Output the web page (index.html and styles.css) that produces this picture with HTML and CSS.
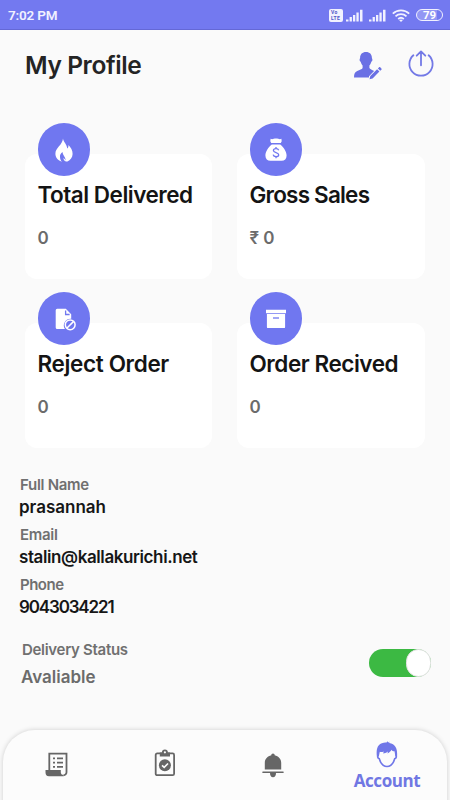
FILE: index.html
```html
<!DOCTYPE html>
<html lang="en">
<head>
    <meta charset="UTF-8">
    <meta name="viewport" content="width=device-width, initial-scale=1.0">
    <title>My Profile</title>
    <link rel="stylesheet" href="styles.css">
</head>
<body>
    <div class="status-bar">
        <span class="time">7:02 PM</span>
        <div class="status-icons">
            <div class="volte"><span>Vo</span><span>LTE</span></div>
            <svg class="signal" viewBox="0 0 17 13" width="17" height="13">
                <path d="M0 12.5v-2h2.5v2zM3.6 12.5V8h2.3v4.5zM7 12.5V6h2.3v6.5zM10.4 12.5V3.5h2.3v9zM14 12.5V.7h2.5v11.8z"/>
            </svg>
            <svg class="signal" viewBox="0 0 17 13" width="17" height="13">
                <path d="M0 12.5v-2h2.5v2zM3.6 12.5V8h2.3v4.5zM7 12.5V6h2.3v6.5zM10.4 12.5V3.5h2.3v9zM14 12.5V.7h2.5v11.8z"/>
            </svg>
            <svg class="wifi" viewBox="0 0 18 13" width="18" height="13">
                <path class="arc" d="M.8 4.600a11.800 11.800 0 0 1 16.400 0M3.500 7.300a8 8 0 0 1 11 0M6.200 10a4.100 4.100 0 0 1 5.600 0"/>
                <path d="M9 13 7.200 11.300a2.600 2.600 0 0 1 3.600 0z"/>
            </svg>
            <span class="battery">79</span>
        </div>
    </div>

    <header>
        <h1>My Profile</h1>
        <div class="header-icons">
            <svg viewBox="0 0 28 28" width="28" height="28">
                <path d="M12 0c3.700 0 5.900 2.300 5.900 5.800 0 1 .6 1 .5 2.300-.1 1-.7 1.500-1.100 1.700-.3 1.600-1 2.700-1.900 3.600v2.600c.6 1.300 2.600 2 4.700 2.900L15 24.200v1.300H0c0-3.900.9-5.500 3.200-6.500 2.400-1 4.800-1.700 5.400-3v-2.600c-.9-.9-1.600-2-1.900-3.600-.5-.2-1-.7-1.100-1.700-.1-1.300.5-1.300.5-2.300C6.100 2.300 8.300 0 12 0z"/>
                <path d="m15.500 27.300.8-3.200 6.800-6.900 2.300 2.300-6.800 6.900zM23.900 16.400l1.200-1.100c.4-.4.900-.3 1.300.1l1 1c.4.400.4.900 0 1.300l-1.200 1.100z"/>
            </svg>
            <svg class="line" viewBox="0 0 26 27" width="26" height="27">
                <path d="M5.400 5.300A11.600 11.600 0 1 0 20.600 5.300M13 15.300V1.500M8.700 5.700 13 1.400l4.300 4.300"/>
            </svg>
        </div>
    </header>

    <section class="cards">
        <div class="card">
            <div class="circle">
                <svg viewBox="0 0 18 24" width="18" height="24">
                    <path d="M8 .5c.3 3.200 3.800 5.500 4.300 10.100.9-.8 1.200-2 1.200-3.600 2.200 2.300 4.300 5.600 4.100 9.100-.1 3.300-2.200 6.300-5.200 7.400H6.500C2.700 22.200.4 19.400.4 15.800.4 9.500 7.400 7.300 8 .5z"/>
                    <path class="slot" d="M7.600 13.900c-1.900 1.300-2.800 3-2.600 5 .1 2 .8 3.500 2 5.100h4.100c-1.600-.9-2.600-2.400-2.700-4.100.9.600 1.700 1.500 2.200 2.500.1-3.700-3.200-5.500-3-8.500z"/>
                </svg>
            </div>
            <h2 class="t1">Total Delivered</h2>
            <p>0</p>
        </div>
        <div class="card">
            <div class="circle">
                <svg viewBox="0 0 22 24" width="22" height="24">
                    <path d="M5.600.8c1.800.9 3-.2 5.400-.2s3.600 1.100 5.400.2l.3 2.500-.9 1.700H6.200L5.300 3.300z"/>
                    <path d="M6.800 6.400h8.400c3.300 2.500 6.400 7 6.400 11.100 0 3.500-2 5.300-5 5.300H5.400c-3 0-5-1.800-5-5.300 0-4.100 3.100-8.600 6.400-11.100z"/>
                    <path class="cut" d="M13.700 12.300c-.4-1.200-1.300-1.700-2.700-1.700-1.600 0-2.600.8-2.600 1.900 0 2.700 5.300 1.400 5.300 4.200 0 1.200-1.100 2-2.700 2-1.500 0-2.600-.7-2.900-2M11 9v1.700M11 18.600v1.600"/>
                </svg>
            </div>
            <h2 class="t2">Gross Sales</h2>
            <p>₹ 0</p>
        </div>
        <div class="card">
            <div class="circle">
                <svg class="file" viewBox="0 0 22 23" width="22" height="23">
                    <path d="M2.200.7h8.600l5.400 5.600v4.400a6.800 6.800 0 0 0-6.300 10.400H2.200A1.500 1.500 0 0 1 .7 19.600V2.200A1.500 1.500 0 0 1 2.200.7z"/>
                    <path class="cut" d="M10.600 2.500v4h4"/>
                    <circle class="ban" cx="15.200" cy="16.800" r="4.900"/>
                    <path class="ban" d="m11.800 20.200 6.800-6.800"/>
                </svg>
            </div>
            <h2 class="t3">Reject Order</h2>
            <p>0</p>
        </div>
        <div class="card">
            <div class="circle">
                <svg class="box" viewBox="0 0 20 20" width="20" height="20">
                    <path d="M0 .8h20v3.500H0zM.9 5h18.200v12.900a1.200 1.200 0 0 1-1.200 1.200H2.100a1.200 1.200 0 0 1-1.200-1.200z"/>
                    <path class="cut" d="M7 9h6"/>
                </svg>
            </div>
            <h2 class="t4">Order Recived</h2>
            <p>0</p>
        </div>
    </section>

    <section class="details">
        <div class="label l1">Full Name</div>
        <div class="value v1">prasannah</div>
        <div class="label l2">Email</div>
        <div class="value v2">stalin@kallakurichi.net</div>
        <div class="label l3">Phone</div>
        <div class="value v3">9043034221</div>
    </section>

    <section class="delivery">
        <div>
            <div class="label l4">Delivery Status</div>
            <div class="available">Avaliable</div>
        </div>
        <div class="toggle"><span class="knob"></span></div>
    </section>

    <nav>
        <a class="nav-item orders">
            <svg viewBox="0 0 24 25" width="24" height="25">
                <path class="stroke" d="M4.300 18V1.700h17.200v18.600a3 3 0 0 1-3 3"/>
                <path d="M.5 18h15.300v2.200c0 1.700 1 2.600 2.700 2.600v1.500H4C1.600 24.300.5 22.700.5 20.300z"/>
                <path d="M8 5.500h2v1.800H8zM12 5.500h6v1.800h-6zM8 9.700h2v1.800H8zM12 9.700h6v1.800h-6zM8 13.900h2v1.800H8zM12 13.900h6v1.800h-6z"/>
            </svg>
        </a>
        <a class="nav-item tasks">
            <svg viewBox="0 0 22 28" width="22" height="28">
                <rect class="stroke" x="1.700" y="4.400" width="18.400" height="21.800" rx="1.500"/>
                <path d="M5.800 3.500h2.100a3 3 0 0 1 6 0h2.100v4H5.800z"/>
                <circle class="hole" cx="10.900" cy="3.300" r="1.100"/>
                <circle cx="10.900" cy="16.300" r="6"/>
                <path class="check" d="m8 16.300 2.200 2.100 3.800-3.900"/>
            </svg>
        </a>
        <a class="nav-item alerts">
            <svg viewBox="0 0 22 25" width="22" height="25">
                <path d="M11 .5c1 0 1.700.7 1.700 1.800 3.800.9 6.500 3.700 6.500 7.400v6.800H2.800V9.700c0-3.700 2.700-6.500 6.500-7.400C9.300 1.200 10 .5 11 .5z"/>
                <path d="M1 18.400h20a.8.800 0 0 1 0 1.600h-7c0 2.500-1 4.200-3 4.200S8 22.500 8 20H1a.8.800 0 0 1 0-1.600z"/>
            </svg>
        </a>
        <a class="nav-item account">
            <svg viewBox="0 0 22 27" width="22" height="27">
                <path class="face" d="M2 11.500 1.700 16c.2 1 .8 1.400 1.600 1.700 1.300 4.600 4.200 7.800 7.700 7.800s6.400-3.200 7.700-7.800c.8-.3 1.400-.7 1.600-1.700l-.3-4.500"/>
                <path d="M.9 15.500C.2 9.200.9 4 5.800 2.200 8 1.400 9.300 1.500 10.600 1.600L11.200.2l1.300 1.200.9-1-.2 1.500c5.800.7 8.600 5.300 7.900 13.600h-1.700l-.9-5.200c-1.500 0-2.400-.5-3.100-1.500-.7 1.600-1.900 2.800-4 3.600l.6-2c-2.200 1.500-3.200 1.900-4.800 2l.5-1.800c-1.600.6-2.900.7-3.900.2l-1 4.700z"/>
            </svg>
            <span>Account</span>
        </a>
    </nav>
</body>
</html>
```

FILE: styles.css
```css
* {
    box-sizing: border-box;
}
body {
    font-family: Inter, "Noto Sans", sans-serif;
    background-color: #FAFAFA;
    margin: 0;
    height: 800px;
    display: flex;
    flex-direction: column;
    overflow: hidden;
}
h1, h2, p {
    margin: 0;
    font-weight: 600;
    white-space: nowrap;
}
svg {
    display: block;
    flex: none;
}

/* Status bar */
.status-bar {
    height: 30px;
    flex: none;
    background-color: #7379F0;
    border-bottom: 1px solid #6468D6;
    color: #F1F1FF;
    display: flex;
    justify-content: space-between;
    align-items: center;
    padding: 1px 7px 0 8px;
}
.time {
    font: 600 13.5px/16px Roboto, sans-serif;
    letter-spacing: -0.2px;
}
.status-icons {
    display: flex;
    align-items: center;
    fill: #F1F1FF;
}
.volte {
    width: 14px;
    height: 13px;
    border-radius: 2px;
    background: #F1F1FF;
    color: #5056C8;
    font: 700 5px/6px Roboto, sans-serif;
    letter-spacing: 0.4px;
    padding-left: 2px;
    margin-right: 3px;
    display: flex;
    flex-direction: column;
    justify-content: center;
}
.signal {
    margin-right: 6px;
}
.wifi {
    margin-right: 6px;
}
.arc {
    fill: none;
    stroke: #F1F1FF;
    stroke-width: 1.8;
}
.battery {
    width: 27px;
    height: 12px;
    border: 1px solid #F1F1FF;
    border-radius: 6px;
    background: linear-gradient(90deg, #9397F4 78%, #7379F0 78%);
    color: #FFFFFF;
    font: 700 11.5px/10.5px Roboto, sans-serif;
    text-align: center;
}

header {
    height: 94px;
    flex: none;
    display: flex;
    justify-content: space-between;
    align-items: flex-start;
    padding: 20px 16px 0 25px;
}
h1 {
    font-size: 24.5px;
    line-height: 30px;
    letter-spacing: -0.4px;
    color: #242424;
}
.header-icons {
    display: flex;
    gap: 26px;
    fill: #6A70E4;
}
.header-icons svg:first-child {
    margin-top: 2px;
}
.line {
    fill: none;
    stroke: #7379E6;
    stroke-width: 1.8;
    stroke-linecap: round;
    stroke-linejoin: round;
}

/* Statistic cards */
.cards {
    display: grid;
    grid-template-columns: 187px 188px;
    grid-auto-rows: 125px;
    gap: 44px 25px;
    padding: 30.4px 0 0 25px;
    flex: none;
}
.card {
    background-color: #FFFFFF;
    border-radius: 12px;
    padding-left: 12.5px;
}
.circle {
    width: 52.5px;
    height: 52.5px;
    margin-top: -31px;
    border-radius: 50%;
    background-color: #7077F0;
    display: flex;
    justify-content: center;
    align-items: center;
    fill: #FFFFFF;
}
.cut {
    fill: none;
    stroke: #7077F0;
    stroke-width: 1.3;
}
.slot {
    fill: #7077F0;
}
.ban {
    fill: none;
    stroke: #FFFFFF;
    stroke-width: 1.5;
}
.file {
    margin: 2px 0 0 4px;
}
.card h2 {
    font-size: 22.5px;
    line-height: 28px;
    margin-top: 5px;
    color: #141414;
}
.t1 {
    letter-spacing: -0.5px;
}
.t2 {
    letter-spacing: -0.8px;
}
.t3 {
    letter-spacing: -0.35px;
}
.t4 {
    letter-spacing: -0.45px;
}
.card p {
    font-size: 17px;
    line-height: 20px;
    margin-top: 19px;
    color: #6B6B6B;
}

/* User details */
.details {
    padding: 26.6px 0 0 19px;
    flex: none;
}
.label {
    font-size: 15px;
    line-height: 20px;
    font-weight: 600;
    color: #707070;
    padding-left: 1px;
    white-space: nowrap;
}
.l1, .l2, .l4 {
    letter-spacing: -0.3px;
}
.l3 {
    letter-spacing: -0.5px;
}
.value {
    font-size: 17px;
    line-height: 24px;
    margin-bottom: 6px;
    font-weight: 600;
    color: #161616;
    white-space: nowrap;
}
.v2 {
    letter-spacing: -0.4px;
}
.v3 {
    letter-spacing: -1.15px;
}

.delivery {
    display: flex;
    justify-content: space-between;
    padding: 15px 19px 0 21px;
    height: 105px;
    flex: none;
}
.available {
    font-size: 17px;
    line-height: 24px;
    margin-top: 5px;
    font-weight: 600;
    color: #6B6B6B;
}
.toggle {
    width: 62px;
    height: 28px;
    margin-top: 9px;
    border-radius: 14px;
    background-color: #3CB943;
    display: flex;
    justify-content: flex-end;
}
.knob {
    width: 25px;
    height: 28px;
    border-radius: 13px;
    background-color: #FFFFFF;
    border: 1px solid #E3E3E3;
}

/* Bottom navigation */
nav {
    height: 90px;
    margin: auto 3px -20px;
    flex: none;
    border-radius: 32px 32px 0 0;
    background-color: #FCFCFC;
    box-shadow: 0 0 5px rgba(0, 0, 0, 0.18);
    display: flex;
    fill: #666666;
}
.nav-item {
    display: flex;
    flex-direction: column;
    align-items: center;
    width: 108px;
}
.orders {
    padding-top: 22px;
}
.tasks {
    padding-top: 19px;
}
.alerts {
    padding-top: 23px;
}
.account {
    padding-top: 11px;
    width: 120px;
    color: #7077E3;
    fill: #7077E8;
}
.account span {
    font: 700 17px/22px "Open Sans", sans-serif;
    letter-spacing: -0.4px;
    margin-top: 2px;
}
.stroke {
    fill: none;
    stroke: #666666;
    stroke-width: 1.8;
}
.hole {
    fill: #FCFCFC;
}
.check {
    fill: none;
    stroke: #FCFCFC;
    stroke-width: 1.6;
}
.face {
    fill: none;
    stroke: #7077E8;
    stroke-width: 1.6;
}
```
